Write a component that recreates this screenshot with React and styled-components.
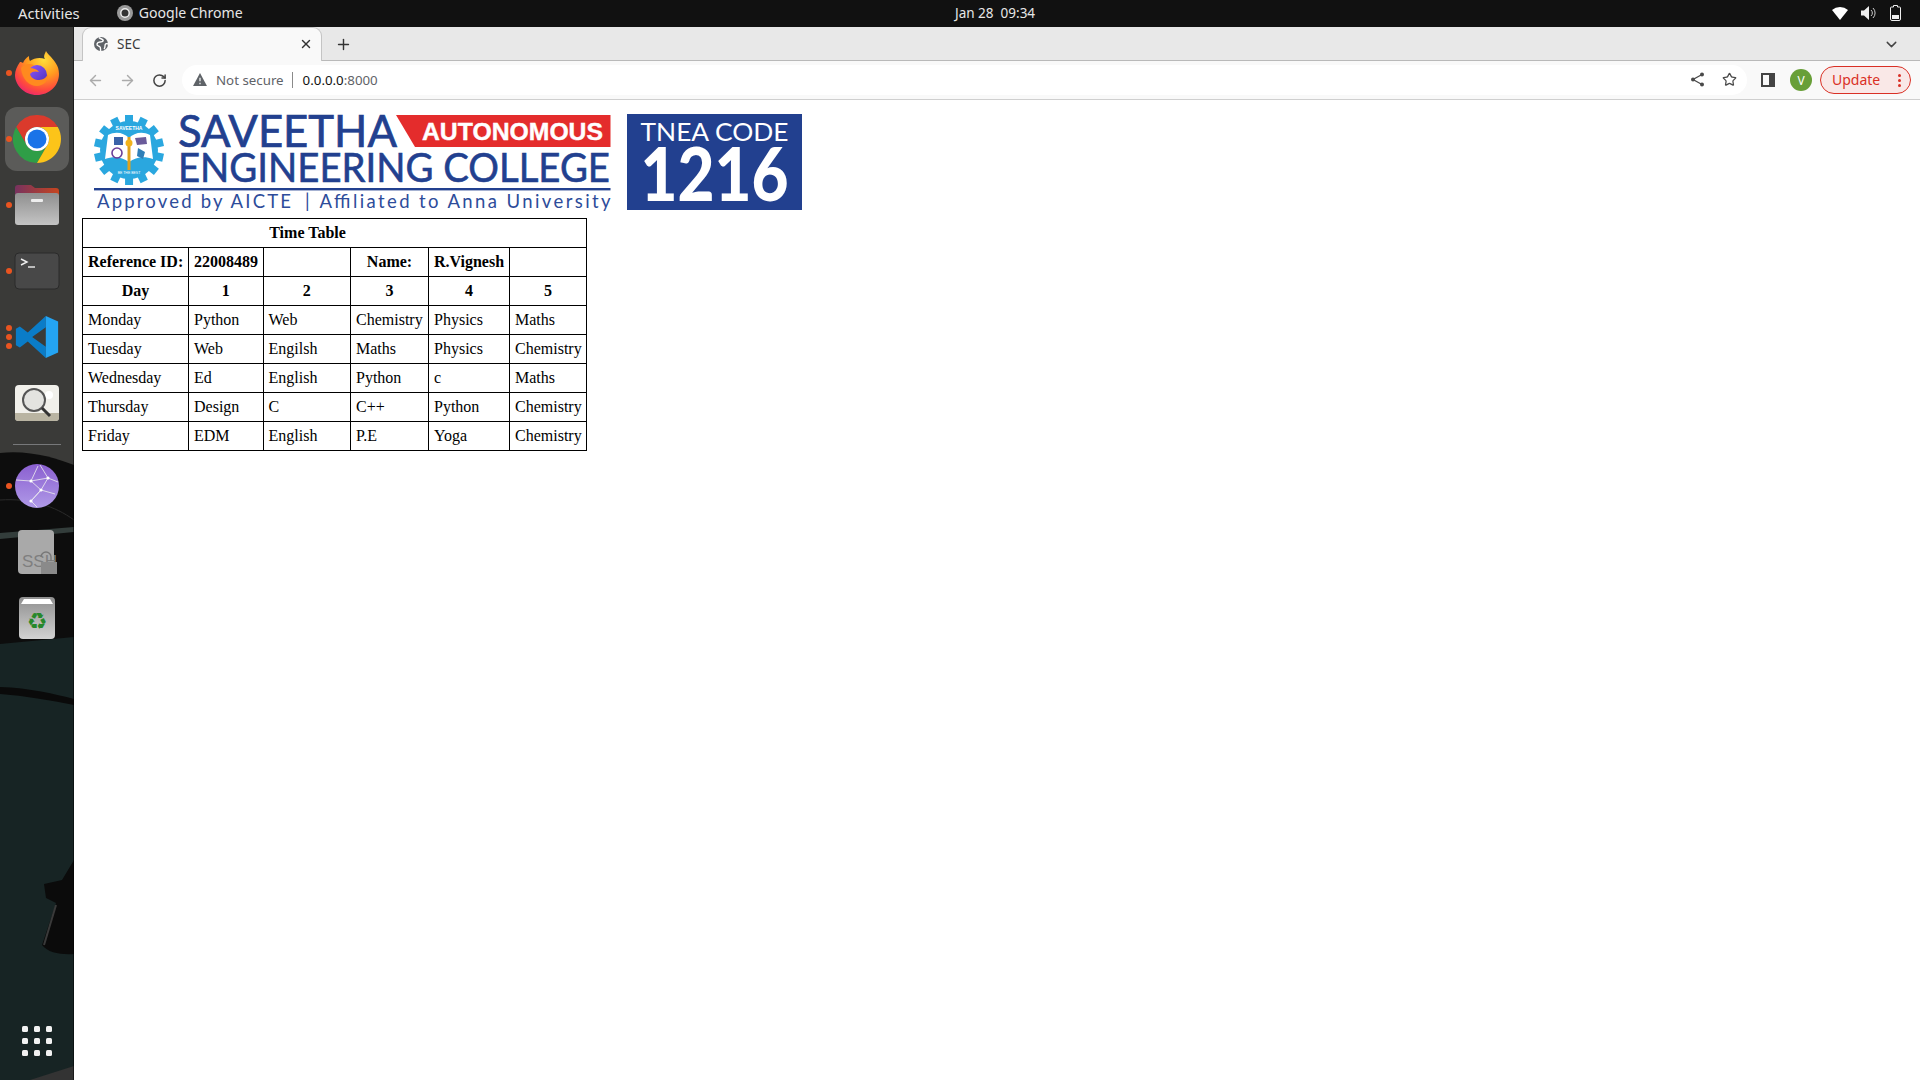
import styled, { createGlobalStyle } from "styled-components";
import { ArrowLeft, ArrowRight, RotateCw, Star, Plus, X, ChevronDown } from "lucide-react";

const Global = createGlobalStyle`
  html, body { margin: 0; padding: 0; height: 100%; overflow: hidden; }
  #root { height: 100%; }
`;

const Screen = styled.div`
  width: 1920px;
  height: 1080px;
  display: flex;
  flex-direction: column;
  font-family: "Liberation Serif", serif;
  background: #fff;
`;

const TopBar = styled.div`
  height: 27px;
  flex: none;
  box-sizing: border-box;
  padding-bottom: 2px;
  background: #111;
  color: #e6e6e6;
  font: 14.8px "Noto Sans", sans-serif;
  display: grid;
  grid-template-columns: 955px auto 1fr;
  align-items: center;
`;

const TopLeft = styled.div`
  display: flex;
  align-items: center;
  padding-left: 18px;
`;

const AppName = styled.div`
  display: flex;
  align-items: center;
  gap: 6px;
  margin-left: 37px;
  font-size: 14.1px;
`;

const Clock = styled.div`
  font-size: 13.5px;
  white-space: pre;
`;

const Tray = styled.div`
  display: flex;
  justify-content: flex-end;
  align-items: center;
  gap: 13px;
  padding-right: 19px;
`;

const Desk = styled.div`
  flex: 1;
  display: flex;
  min-height: 0;
`;

const Dock = styled.div`
  width: 74px;
  flex: none;
  position: relative;
  display: flex;
  flex-direction: column;
  align-items: center;
  padding: 13px 0 6px;
  box-sizing: border-box;
  background: #3a3a38;
`;

const Wallpaper = styled.svg`
  position: absolute;
  inset: 0;
  width: 100%;
  height: 100%;
`;

const Slot = styled.div`
  position: relative;
  width: 64px;
  height: 66px;
  display: flex;
  align-items: center;
  justify-content: center;
  flex: none;
  &::before {
    content: "";
    position: absolute;
    left: 0;
    right: 0;
    top: 1px;
    bottom: 1px;
    border-radius: 12px;
    background: ${(p) => (p.$active ? "#5b5b59" : "transparent")};
  }
  & > svg {
    position: relative;
  }
`;

const Dot = styled.span`
  position: absolute;
  left: 1px;
  top: ${(p) => p.$top}px;
  width: 6px;
  height: 6px;
  border-radius: 50%;
  background: #e95420;
`;

const Separator = styled.div`
  position: relative;
  width: 48px;
  height: 1px;
  background: #77787a;
  margin: 8px 0;
  flex: none;
`;

const AppGrid = styled.div`
  position: relative;
  margin-top: auto;
  margin-bottom: 18px;
  display: grid;
  grid-template-columns: repeat(3, 6px);
  grid-auto-rows: 6px;
  gap: 6px;
  i {
    background: #f2f2f2;
    border-radius: 1.5px;
  }
`;

const Browser = styled.div`
  flex: 1;
  display: flex;
  flex-direction: column;
  min-width: 0;
`;

const TabStrip = styled.div`
  height: 34px;
  flex: none;
  background: #e8e8e8;
  border-bottom: 1px solid #b9b9b9;
  box-sizing: border-box;
  display: flex;
  align-items: flex-end;
  padding-left: 8px;
  color: #444;
`;

const Tab = styled.div`
  width: 240px;
  height: 34px;
  margin-bottom: -1px;
  box-sizing: border-box;
  background: #f9f9f9;
  border: 1px solid #c4c4c4;
  border-bottom: none;
  border-radius: 9px 9px 0 0;
  display: flex;
  align-items: center;
  padding: 0 8px 2px 10px;
  gap: 8px;
  font: 13.5px "Noto Sans", sans-serif;
  color: #3c3c3c;
  span { flex: 1; }
`;

const NewTab = styled.div`
  display: flex;
  align-items: center;
  height: 32px;
  margin-left: 13px;
  flex: 1;
`;

const TabMenu = styled.div`
  display: flex;
  height: 32px;
  align-items: center;
  padding-right: 20px;
`;

const ToolBar = styled.div`
  height: 39px;
  flex: none;
  background: #f9f9f9;
  border-bottom: 1px solid #cfcfcf;
  box-sizing: border-box;
  display: flex;
  align-items: center;
  padding-left: 10px;
  gap: 10px;
  color: #aaa;
`;

const NavButton = styled.div`
  width: 22px;
  height: 22px;
  display: flex;
  align-items: center;
  justify-content: center;
  color: ${(p) => (p.$on ? "#444" : "#ababab")};
`;

const Omnibox = styled.div`
  width: 1565px;
  height: 30px;
  margin-left: 2px;
  border-radius: 15px;
  background: #fff;
  display: flex;
  align-items: center;
  padding: 0 10px 1px 11px;
  box-sizing: border-box;
  font: 13.3px "Noto Sans", sans-serif;
  color: #5f6368;
`;

const NotSecure = styled.span`
  margin-left: 9px;
  padding-right: 8px;
  border-right: 1px solid #8a8a8a;
  line-height: 16px;
`;

const Address = styled.span`
  margin-left: 10px;
  flex: 1;
  b {
    font-weight: 400;
    color: #111;
  }
`;

const BoxIcons = styled.div`
  display: flex;
  align-items: center;
  gap: 17px;
  color: #4a4a4a;
`;

const SidePanel = styled.svg`
  margin-left: 4px;
`;

const Profile = styled.div`
  width: 22px;
  height: 22px;
  border-radius: 50%;
  background: #689f38;
  color: #fff;
  font: 12px "Noto Sans", sans-serif;
  display: flex;
  align-items: center;
  justify-content: center;
  margin-left: 5px;
`;

const Update = styled.div`
  width: 91px;
  height: 28px;
  box-sizing: border-box;
  margin-left: -2px;
  border: 1px solid #d93025;
  border-radius: 14px;
  background: #f9e8e7;
  color: #d93025;
  font: 14px "Noto Sans", sans-serif;
  display: flex;
  align-items: center;
  justify-content: space-between;
  padding: 0 9px 2px 11px;
`;

const Kebab = styled.div`
  display: grid;
  gap: 2px;
  margin-top: 2px;
  i {
    width: 3px;
    height: 3px;
    border-radius: 50%;
    background: #d93025;
  }
`;

const Page = styled.div`
  flex: 1;
  background: #fff;
  padding: 7px 8px 8px;
`;

const Logos = styled.div`
  display: flex;
  height: 111px;
`;

const LogoSvg = styled.svg`
  overflow: visible;
  display: block;
`;

const TnWrap = styled.div`
  margin: 7px 0 0 11px;
`;

const Table = styled.table`
  border-collapse: collapse;
  table-layout: fixed;
  width: 504px;
  font-size: 16px;
  color: #000;
`;

const Th = styled.th`
  border: 1px solid #000;
  height: 28px;
  padding: 0 ${(p) => (p.$title ? 59 : 5)}px 0 5px;
  text-align: center;
  white-space: nowrap;
`;

const Td = styled.td`
  border: 1px solid #000;
  height: 28px;
  padding: 0 5px;
  white-space: nowrap;
`;

const Col = styled.col`
  width: ${(p) => p.$w}px;
`;

const widths = [106, 74.5, 87.5, 78, 81, 77];

const rows = [
  ["Monday", "Python", "Web", "Chemistry", "Physics", "Maths"],
  ["Tuesday", "Web", "Engilsh", "Maths", "Physics", "Chemistry"],
  ["Wednesday", "Ed", "English", "Python", "c", "Maths"],
  ["Thursday", "Design", "C", "C++", "Python", "Chemistry"],
  ["Friday", "EDM", "English", "P.E", "Yoga", "Chemistry"],
];

const Firefox = () => (
  <svg width="44" height="44" viewBox="0 0 44 44">
    <defs>
      <radialGradient id="ffa" cx="0.65" cy="0.2" r="0.95">
        <stop offset="0" stopColor="#ffde3b" />
        <stop offset="0.4" stopColor="#ff9a1f" />
        <stop offset="0.72" stopColor="#ff4a3d" />
        <stop offset="1" stopColor="#e31587" />
      </radialGradient>
      <linearGradient id="ffb" x1="0" y1="0" x2="1" y2="1">
        <stop offset="0" stopColor="#9059ff" />
        <stop offset="1" stopColor="#4b2fb8" />
      </linearGradient>
    </defs>
    <path d="M31 0c-1 3-3 5-1 8-5-2-11-1-15 2-1-2-1-3-1-5-3 2-5 4-6 7-1-1-2-1-3-1-3 4-5 9-5 13 0 10 9 20 22 20 12 0 22-9 22-21 0-9-5-13-8-17-2-2-4-4-5-6z" fill="url(#ffa)" />
    <circle cx="22" cy="24" r="10" fill="url(#ffb)" />
    <path d="M6 17c3-4 8-5 13-3l-4 3c3 0 7 1 9 4-3-1-7-1-9 2 1 4 5 6 9 6 4 0 8-3 9-6 1 7-5 12-11 12-8 0-15-7-16-18z" fill="#ff8a1f" />
  </svg>
);

const Chrome = () => (
  <svg width="48" height="48" viewBox="0 0 48 48">
    <path d="M3.2 12A24 24 0 0 1 44.78 12L24 12A12 12 0 0 0 13.6 30Z" fill="#db3a2c" />
    <path d="M3.2 12A24 24 0 0 0 24 48L34.4 30A12 12 0 0 1 13.6 30Z" fill="#2f9e47" />
    <path d="M24 12L44.78 12A24 24 0 0 1 24 48L34.4 30A12 12 0 0 0 24 12Z" fill="#fcc419" />
    <circle cx="24" cy="24" r="12" fill="#fff" />
    <circle cx="24" cy="24" r="9.5" fill="#1a73e8" />
  </svg>
);

const Files = () => (
  <svg width="46" height="42" viewBox="0 0 46 42">
    <defs>
      <linearGradient id="fld" x1="0" y1="0" x2="1" y2="0">
        <stop offset="0" stopColor="#77325f" />
        <stop offset="1" stopColor="#c6451f" />
      </linearGradient>
      <linearGradient id="flg" x1="0" y1="0" x2="0" y2="1">
        <stop offset="0" stopColor="#8f8f8f" />
        <stop offset="1" stopColor="#c4c4c4" />
      </linearGradient>
    </defs>
    <path d="M1 4a3 3 0 0 1 3-3h13l4 3h21a3 3 0 0 1 3 3v10H1z" fill="url(#fld)" />
    <rect x="1" y="9" width="44" height="32" rx="3" fill="url(#flg)" />
    <rect x="17" y="15" width="12" height="3" rx="1" fill="#eee" />
  </svg>
);

const Terminal = () => (
  <svg width="46" height="38" viewBox="0 0 46 38">
    <rect x="1" y="1" width="44" height="36" rx="4" fill="#484848" stroke="#2a2a2a" />
    <path d="M7 7l6 3-6 3" fill="none" stroke="#eee" strokeWidth="1.4" />
    <path d="M14 15h7" stroke="#eee" strokeWidth="1.4" />
  </svg>
);

const VsCode = () => (
  <svg width="44" height="44" viewBox="0 0 100 100">
    <path d="M70 2L29 40 11 26 2 31v38l9 5 18-14 41 38V72L39 50l31-22z" fill="#0a7cc8" />
    <path d="M70 2l28 13v70L70 98z" fill="#24a4f3" />
  </svg>
);

const Search = () => (
  <svg width="46" height="38" viewBox="0 0 46 38">
    <rect x="1" y="1" width="44" height="36" rx="4" fill="#f1f0eb" />
    <path d="M1 29h44v5a3 3 0 0 1-3 3H4a3 3 0 0 1-3-3z" fill="#b9b4a2" />
    <circle cx="35" cy="11" r="4" fill="#fff" />
    <circle cx="20" cy="16" r="11" fill="#e3e3e0" stroke="#555" strokeWidth="2" />
    <path d="M28 24l8 8" stroke="#333" strokeWidth="3" />
  </svg>
);

const Globe = () => (
  <svg width="46" height="46" viewBox="0 0 46 46">
    <defs>
      <linearGradient id="glb" x1="0" y1="0" x2="0" y2="1">
        <stop offset="0" stopColor="#8a5fd0" />
        <stop offset="1" stopColor="#b09ae8" />
      </linearGradient>
    </defs>
    <circle cx="23" cy="23" r="22" fill="url(#glb)" />
    <path d="M2 17l15 1 17-3 10 4M17 18l10 9-10 11M34 15l-7 12 14 4M27 27l-10 11M26 2l8 13M17 18L24 3M17 38l6 6" fill="none" stroke="#eee" strokeWidth="0.8" />
    <circle cx="17" cy="18" r="1.6" fill="#fff" />
    <circle cx="34" cy="15" r="1.6" fill="#fff" />
    <circle cx="27" cy="27" r="1.6" fill="#fff" />
    <circle cx="17" cy="38" r="1.6" fill="#fff" />
  </svg>
);

const Ssh = () => (
  <svg width="40" height="46" viewBox="0 0 40 46">
    <rect x="1" y="1" width="36" height="44" rx="4" fill="#a9a9a9" />
    <text x="5" y="38" fontFamily="Liberation Sans" fontSize="17" fill="#7f7f7f">SSH</text>
    <path d="M24 28a5 5 0 0 1 10 0v4" fill="none" stroke="#777" strokeWidth="1.4" />
    <rect x="24" y="33" width="16" height="12" fill="#8a8a8a" />
  </svg>
);

const Trash = () => (
  <svg width="38" height="44" viewBox="0 0 38 44">
    <defs>
      <linearGradient id="trs" x1="0" y1="0" x2="0" y2="1">
        <stop offset="0" stopColor="#8f8f8f" />
        <stop offset="1" stopColor="#d2d2d2" />
      </linearGradient>
    </defs>
    <rect x="1" y="1" width="36" height="42" rx="4" fill="url(#trs)" />
    <path d="M6 3h26l3 5H3z" fill="#fff" />
    <text x="19" y="33" textAnchor="middle" fontFamily="DejaVu Sans" fontSize="23" fill="#27882b">♻</text>
  </svg>
);

const ShareIcon = () => (
  <svg width="15" height="15" viewBox="0 0 15 15">
    <path d="M12 2.500L3 7.500l9 5" fill="none" stroke="#4a4a4a" strokeWidth="1.300" />
    <circle cx="12" cy="2.500" r="2" fill="#4a4a4a" />
    <circle cx="3" cy="7.500" r="2" fill="#4a4a4a" />
    <circle cx="12" cy="12.500" r="2" fill="#4a4a4a" />
  </svg>
);

const Logo = () => (
  <LogoSvg width="534" height="111" viewBox="0 0 534 111">
    <g fill="#2aa7df">
      {Array.from({ length: 14 }).map((_, i) => (
        <rect key={i} x="43" y="8" width="8" height="10" transform={`rotate(${i * 25.7} 47 43)`} />
      ))}
    </g>
    <circle cx="47" cy="43" r="29" fill="#2aa7df" />
    <path d="M26 28c8-4 16-2 21 3 5-5 13-7 21-3l3 24c-9-3-17-2-24 3-7-5-15-6-24-3z" fill="#fff" />
    <rect x="32" y="30" width="9" height="8" fill="#3a62a8" />
    <path d="M53 31l11-1 1 7-10 1z" fill="#6a5b9a" />
    <circle cx="35" cy="46" r="5" fill="none" stroke="#6b3f9a" strokeWidth="1.6" />
    <path d="M56 41l7 4-2 7-6-3z" fill="#2f7fb8" />
    <path d="M47 30v33" stroke="#e0a21c" strokeWidth="3" />
    <circle cx="47" cy="36" r="3.500" fill="#f2b31c" />
    <text x="47" y="23" textAnchor="middle" fontFamily="Liberation Sans" fontWeight="700" fontSize="5" fill="#fff">SAVEETHA</text>
    <text x="47" y="67" textAnchor="middle" fontFamily="Liberation Sans" fontSize="3.500" fill="#fff">BE THE BEST</text>
    <text x="96" y="40" fontFamily="Lato" fontSize="45" fill="#22408f" stroke="#22408f" strokeWidth="0.7" textLength="219" lengthAdjust="spacingAndGlyphs">SAVEETHA</text>
    <path d="M314 8h214.500v32H333z" fill="#e42c2c" />
    <text x="340" y="33" fontFamily="Liberation Sans" fontWeight="700" fontSize="24" fill="#fff" stroke="#fff" strokeWidth="0.4" textLength="181" lengthAdjust="spacingAndGlyphs">AUTONOMOUS</text>
    <text x="96" y="75" fontFamily="Lato" fontSize="41" fill="#22408f" stroke="#22408f" strokeWidth="0.6" textLength="432" lengthAdjust="spacingAndGlyphs">ENGINEERING COLLEGE</text>
    <rect x="12" y="81" width="516.500" height="2.400" fill="#22408f" />
    <text x="15" y="101" fontFamily="Lato" fontSize="18.500" fill="#2d4c9a" textLength="194" lengthAdjust="spacing">Approved by AICTE</text>
    <text x="223" y="101" fontFamily="Lato" fontSize="18.500" fill="#2d4c9a">|</text>
    <text x="237.600" y="101" fontFamily="Lato" fontSize="18.500" fill="#2d4c9a" textLength="291" lengthAdjust="spacing">Affiliated to Anna University</text>
  </LogoSvg>
);

const Tnea = () => (
  <LogoSvg width="175" height="96" viewBox="0 0 175 96">
    <rect width="175" height="96" fill="#22408f" />
    <text x="87.500" y="27" textAnchor="middle" fontFamily="Lato" fontSize="25" fill="#fff" textLength="148" lengthAdjust="spacingAndGlyphs">TNEA CODE</text>
    <text x="87.500" y="87" textAnchor="middle" fontFamily="Lato" fontWeight="900" fontSize="74" fill="#fff" textLength="148" lengthAdjust="spacingAndGlyphs">1216</text>
  </LogoSvg>
);

export default function App() {
  return (
    <Screen>
      <Global />
      <TopBar>
        <TopLeft>
          Activities
          <AppName>
            <svg width="16" height="16" viewBox="0 0 16 16">
              <circle cx="8" cy="8" r="8" fill="#9a9a9a" />
              <circle cx="8" cy="8" r="4.200" fill="#333" stroke="#eee" strokeWidth="1.400" />
            </svg>
            Google Chrome
          </AppName>
        </TopLeft>
        <Clock>Jan 28  09:34</Clock>
        <Tray>
          <svg width="16" height="14" viewBox="0 0 16 14">
            <path d="M0 4a12 12 0 0 1 16 0L8 14z" fill="#fff" />
          </svg>
          <svg width="16" height="14" viewBox="0 0 16 14">
            <path d="M0 4.500h3L8 0v14L3 9.500H0z" fill="#eee" />
            <path d="M10 4a4 4 0 0 1 0 6M12 2a7 7 0 0 1 0 10" fill="none" stroke="#ccc" />
          </svg>
          <svg width="11" height="16" viewBox="0 0 11 16">
            <path d="M3.500.5h4v1.500H9.500a1 1 0 0 1 1 1V14a1.500 1.500 0 0 1-1.500 1.500H2A1.500 1.500 0 0 1 .5 14V3a1 1 0 0 1 1-1h2z" fill="none" stroke="#eee" />
            <rect x="2" y="10" width="7" height="4" fill="#eee" />
          </svg>
        </Tray>
      </TopBar>
      <Desk>
        <Dock>
          <Wallpaper viewBox="0 27 74 1053" preserveAspectRatio="none">
            <path d="M0 453C30 450 55 458 74 465V1080H0z" fill="#0d0d0d" />
            <path d="M0 500C30 498 55 506 74 520" fill="none" stroke="#2a2a2a" strokeWidth="1" />
            <path d="M0 533L74 527V532L0 539z" fill="#333d3b" />
            <path d="M0 644L74 637V1080H0z" fill="#172424" />
            <path d="M0 687C30 688 55 694 74 699V705C50 700 25 696 0 694z" fill="#0a0a0a" />
            <path d="M74 860L62 880 44 884 46 898 56 903 42 945C48 953 62 955 74 954z" fill="#0b0b0b" />
            <path d="M56 905L44 945" stroke="#3a3a3a" strokeWidth="2" />
            <path d="M30 1080L74 1066V1080z" fill="#333" />
            <rect x="73" y="27" width="1" height="1053" fill="#000" opacity="0.5" />
          </Wallpaper>
          <Slot><Dot $top={30} /><Firefox /></Slot>
          <Slot $active><Dot $top={30} /><Chrome /></Slot>
          <Slot><Dot $top={30} /><Files /></Slot>
          <Slot><Dot $top={30} /><Terminal /></Slot>
          <Slot>
            <Dot $top={21} /><Dot $top={30} /><Dot $top={39} />
            <VsCode />
          </Slot>
          <Slot><Search /></Slot>
          <Separator />
          <Slot><Dot $top={30} /><Globe /></Slot>
          <Slot><Ssh /></Slot>
          <Slot><Trash /></Slot>
          <AppGrid>
            {Array.from({ length: 9 }).map((_, i) => <i key={i} />)}
          </AppGrid>
        </Dock>
        <Browser>
          <TabStrip>
            <Tab>
              <svg width="16" height="16" viewBox="0 0 16 16">
                <circle cx="8" cy="8" r="7" fill="#5f6368" />
                <path d="M6 1.500c1 1.500 3 1 4 2.500S8 6 7 6 4.500 6 4 8s2 2 3 3 0 3 1 4M15 8c-2-1-3 0-3 2s-1 3-1 3" fill="none" stroke="#fff" strokeWidth="1.400" />
              </svg>
              <span>SEC</span>
              <X size={14} color="#333" strokeWidth={2.5} />
            </Tab>
            <NewTab><Plus size={17} color="#333" strokeWidth={2} /></NewTab>
            <TabMenu><ChevronDown size={17} color="#444" strokeWidth={2} /></TabMenu>
          </TabStrip>
          <ToolBar>
            <NavButton><ArrowLeft size={17} /></NavButton>
            <NavButton><ArrowRight size={17} /></NavButton>
            <NavButton $on><RotateCw size={15} strokeWidth={2.4} /></NavButton>
            <Omnibox>
              <svg width="14" height="13" viewBox="0 0 15 14">
                <path d="M7.500 0L15 14H0z" fill="#5f6368" />
                <path d="M7.500 5v4M7.500 10.500v1.500" stroke="#fff" strokeWidth="1.300" />
              </svg>
              <NotSecure>Not secure</NotSecure>
              <Address><b>0.0.0.0</b>:8000</Address>
              <BoxIcons>
                <ShareIcon />
                <Star size={15} strokeWidth={2} />
              </BoxIcons>
            </Omnibox>
            <SidePanel width="14" height="14" viewBox="0 0 14 14">
              <rect x="1" y="1" width="12" height="12" fill="none" stroke="#444" strokeWidth="2" />
              <rect x="8" y="1" width="5" height="12" fill="#444" />
            </SidePanel>
            <Profile>V</Profile>
            <Update>
              Update
              <Kebab><i /><i /><i /></Kebab>
            </Update>
          </ToolBar>
          <Page>
            <Logos>
              <Logo />
              <TnWrap><Tnea /></TnWrap>
            </Logos>
            <Table>
              <colgroup>
                {widths.map((w, i) => <Col key={i} $w={w} />)}
              </colgroup>
              <tbody>
                <tr><Th colSpan={6} $title>Time Table</Th></tr>
                <tr>
                  <Th>Reference ID:</Th>
                  <Th>22008489</Th>
                  <Th />
                  <Th>Name:</Th>
                  <Th>R.Vignesh</Th>
                  <Th />
                </tr>
                <tr>
                  <Th>Day</Th>
                  <Th>1</Th>
                  <Th>2</Th>
                  <Th>3</Th>
                  <Th>4</Th>
                  <Th>5</Th>
                </tr>
                {rows.map((row) => (
                  <tr key={row[0]}>
                    {row.map((cell, i) => <Td key={i}>{cell}</Td>)}
                  </tr>
                ))}
              </tbody>
            </Table>
          </Page>
        </Browser>
      </Desk>
    </Screen>
  );
}
